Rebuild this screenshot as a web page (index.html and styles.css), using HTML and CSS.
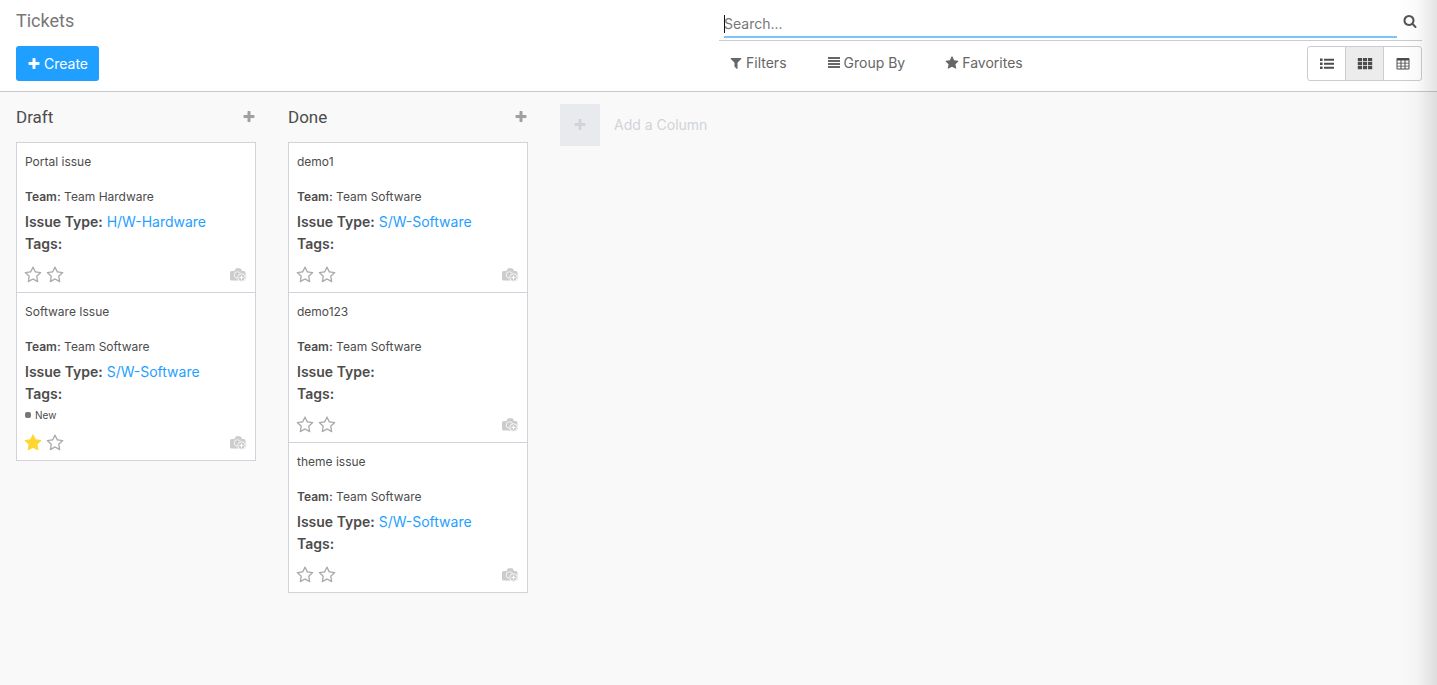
FILE: index.html
```html
<!DOCTYPE html>
<html lang="en">
<head>
<meta charset="utf-8">
<title>Tickets</title>
<link rel="stylesheet" href="styles.css">
</head>
<body>
<svg class="sprite" aria-hidden="true">
  <symbol id="plus" viewBox="0 0 1792 1792"><path d="M1600 736v192q0 40-28 68t-68 28h-416v416q0 40-28 68t-68 28h-192q-40 0-68-28t-28-68v-416h-416q-40 0-68-28t-28-68v-192q0-40 28-68t68-28h416v-416q0-40 28-68t68-28h192q40 0 68 28t28 68v416h416q40 0 68 28t28 68z"/></symbol>
  <symbol id="filter" viewBox="0 0 1792 1792"><path d="M1595 295q17 41-14 70l-493 493v742q0 42-39 59-13 5-25 5-27 0-45-19l-256-256q-19-19-19-45v-486l-493-493q-31-29-14-70 17-39 59-39h1280q42 0 59 39z"/></symbol>
  <symbol id="bars" viewBox="0 0 14 14"><path d="M1 1h12v2H1zM1 4h12v2H1zM1 7h12v2H1zM1 10h12v2H1z"/></symbol>
  <symbol id="star" viewBox="0 0 1792 1792"><path d="M1728 647q0 22-26 48l-363 354 86 500q1 7 1 20 0 21-10.500 35.500t-30.500 14.500q-19 0-40-12l-449-236-449 236q-22 12-40 12-21 0-31.500-14.500t-10.500-35.500q0-6 2-20l86-500-364-354q-25-27-25-48 0-37 56-46l502-73 225-455q19-41 49-41t49 41l225 455 502 73q56 9 56 46z"/></symbol>
  <symbol id="star-o" viewBox="0 0 1792 1792"><path d="M1201 1004l306-297-422-62-189-382-189 382-422 62 306 297-73 421 378-199 377 199zm527-357q0 22-26 48l-363 354 86 500q1 7 1 20 0 50-41 50-19 0-40-12l-449-236-449 236q-22 12-40 12-21 0-31.500-14.500t-10.500-35.500q0-6 2-20l86-500-364-354q-25-27-25-48 0-37 56-46l502-73 225-455q19-41 49-41t49 41l225 455 502 73q56 9 56 46z"/></symbol>
  <symbol id="search" viewBox="0 0 1792 1792"><path d="M1216 832q0-185-131.500-316.500t-316.500-131.500-316.500 131.500-131.500 316.500 131.500 316.500 316.500 131.500 316.500-131.500 131.500-316.500zm512 832q0 52-38 90t-90 38q-54 0-90-38l-343-342q-179 124-399 124-143 0-273.500-55.500t-225-150-150-225-55.500-273.500 55.500-273.500 150-225 225-150 273.500-55.500 273.500 55.500 225 150 150 225 55.500 273.500q0 220-124 399l343 343q37 37 37 90z"/></symbol>
  <symbol id="list" viewBox="0 0 16 14"><path d="M1 1.500h2.600v2.500H1zM5 1.800h10v2H5zM1 5.500h2.600v2.500H1zM5 5.800h10v2H5zM1 9.500h2.600v2.500H1zM5 9.800h10v2H5z"/></symbol>
  <symbol id="grid" viewBox="0 0 16 14"><path d="M.8 1h4.200v3.200H.8zM5.900 1h4.200v3.200H5.900zM11 1h4.200v3.200H11zM.8 5h4.200v3.200H.8zM5.900 5h4.200v3.200H5.900zM11 5h4.200v3.200H11zM.8 9h4.200v3.200H.8zM5.900 9h4.200v3.200H5.900zM11 9h4.200v3.200H11z"/></symbol>
  <symbol id="table" viewBox="0 0 16 14"><path fill-rule="evenodd" d="M2.500 1h11q1 0 1 1v9.500q0 1-1 1h-11q-1 0-1-1V2q0-1 1-1zM2.500 3.500h3v2.200h-3zM6.500 3.500h3v2.200h-3zM10.500 3.500h3v2.200h-3zM2.500 6.500h3v2.200h-3zM6.500 6.500h3v2.200h-3zM10.500 6.500h3v2.200h-3zM2.500 9.500h3v2h-3zM6.500 9.500h3v2h-3zM10.500 9.500h3v2h-3z"/></symbol>
  <symbol id="camera" viewBox="0 0 16 14">
    <path fill="#cccccc" d="M1.500 3h3l1-2q.3-.7 1-.7h3.500q.7 0 1 .7l1 2h2q1.500 0 1.500 1.500v6.500q0 1.500-1.500 1.500h-12.500q-1.500 0-1.500-1.500V4.500Q0 3 1.500 3z"/>
    <circle cx="7.500" cy="7" r="3.300" fill="none" stroke="#f4f4f4"/>
    <circle cx="11.500" cy="9.500" r="3.800" fill="#cccccc" stroke="#f8f8f8"/>
    <path d="M11.500 7.500v4M9.500 9.500h4" stroke="#fff"/>
  </symbol>
</svg>

<header class="panel">
  <div class="panel-left">
    <h1 class="title">Tickets</h1>
    <button class="create" type="button"><svg class="icon"><use href="#plus"/></svg>Create</button>
  </div>
  <div class="panel-right">
    <div class="search">
      <div class="field"><span class="caret"></span><input class="search-input" type="text" placeholder="Search..." aria-label="Search"></div>
      <button class="search-button" type="button" aria-label="Search"><svg class="icon"><use href="#search"/></svg></button>
    </div>
    <div class="tools">
      <div class="options">
        <button class="option" type="button"><svg class="icon"><use href="#filter"/></svg>Filters</button>
        <button class="option" type="button"><svg class="icon"><use href="#bars"/></svg>Group By</button>
        <button class="option" type="button"><svg class="icon"><use href="#star"/></svg>Favorites</button>
      </div>
      <div class="views">
        <button class="view" type="button" aria-label="List view"><svg class="view-icon"><use href="#list"/></svg></button>
        <button class="view active" type="button" aria-label="Kanban view"><svg class="view-icon"><use href="#grid"/></svg></button>
        <button class="view" type="button" aria-label="Pivot view"><svg class="view-icon"><use href="#table"/></svg></button>
      </div>
    </div>
  </div>
</header>

<main class="board">
  <section class="column">
    <div class="column-head"><h2 class="column-title">Draft</h2><button class="add" type="button" aria-label="Add to Draft"><svg class="icon"><use href="#plus"/></svg></button></div>
    <article class="card">
      <div class="name">Portal issue</div>
      <div class="team"><b>Team:</b> Team Hardware</div>
      <div class="line"><b>Issue Type:</b> <a class="link" href="#">H/W-Hardware</a></div>
      <div class="line"><b>Tags:</b></div>
      <div class="foot"><svg class="rate"><use href="#star-o"/></svg><svg class="rate"><use href="#star-o"/></svg><svg class="camera"><use href="#camera"/></svg></div>
    </article>
    <article class="card">
      <div class="name">Software Issue</div>
      <div class="team"><b>Team:</b> Team Software</div>
      <div class="line"><b>Issue Type:</b> <a class="link" href="#">S/W-Software</a></div>
      <div class="line"><b>Tags:</b></div>
      <div class="tag"><span class="dot"></span>New</div>
      <div class="foot"><svg class="rate on"><use href="#star"/></svg><svg class="rate"><use href="#star-o"/></svg><svg class="camera"><use href="#camera"/></svg></div>
    </article>
  </section>
  <section class="column">
    <div class="column-head"><h2 class="column-title">Done</h2><button class="add" type="button" aria-label="Add to Done"><svg class="icon"><use href="#plus"/></svg></button></div>
    <article class="card">
      <div class="name">demo1</div>
      <div class="team"><b>Team:</b> Team Software</div>
      <div class="line"><b>Issue Type:</b> <a class="link" href="#">S/W-Software</a></div>
      <div class="line"><b>Tags:</b></div>
      <div class="foot"><svg class="rate"><use href="#star-o"/></svg><svg class="rate"><use href="#star-o"/></svg><svg class="camera"><use href="#camera"/></svg></div>
    </article>
    <article class="card">
      <div class="name">demo123</div>
      <div class="team"><b>Team:</b> Team Software</div>
      <div class="line"><b>Issue Type:</b></div>
      <div class="line"><b>Tags:</b></div>
      <div class="foot"><svg class="rate"><use href="#star-o"/></svg><svg class="rate"><use href="#star-o"/></svg><svg class="camera"><use href="#camera"/></svg></div>
    </article>
    <article class="card">
      <div class="name">theme issue</div>
      <div class="team"><b>Team:</b> Team Software</div>
      <div class="line"><b>Issue Type:</b> <a class="link" href="#">S/W-Software</a></div>
      <div class="line"><b>Tags:</b></div>
      <div class="foot"><svg class="rate"><use href="#star-o"/></svg><svg class="rate"><use href="#star-o"/></svg><svg class="camera"><use href="#camera"/></svg></div>
    </article>
  </section>
  <button class="new-column" type="button"><span class="new-box"><svg class="icon"><use href="#plus"/></svg></span>Add a Column</button>
</main>
<div class="edge"></div>
</body>
</html>
```
FILE: styles.css
```css
* { box-sizing: border-box; }
body {
  margin: 0;
  min-height: 100vh;
  display: flex;
  flex-direction: column;
  background: #f9f9f9;
  color: #4c4c4c;
  font: 14px/22px Inter, "Open Sans", sans-serif;
}
button {
  margin: 0;
  padding: 0;
  border: 0;
  background: none;
  color: inherit;
  font: inherit;
  display: flex;
  align-items: center;
}
svg { fill: currentColor; flex: none; }
.sprite { position: absolute; width: 0; height: 0; }
.icon { width: 14px; height: 14px; }

.panel {
  display: grid;
  grid-template-columns: 1fr 1fr;
  padding: 0 15px 0 16px;
  background: #fff;
  border-bottom: 1px solid #c8c8c8;
}
.panel-left {
  display: flex;
  flex-direction: column;
  align-items: flex-start;
  gap: 14px;
  padding: 10px 0;
}
.title {
  margin: 0;
  color: #777;
  font: 400 18px/22px Roboto, sans-serif;
}
.create {
  height: 35px;
  padding: 0 11px;
  gap: 3px;
  border-radius: 3px;
  background: #1f9fff;
  color: #fff;
}
.panel-right { display: flex; flex-direction: column; }
.search {
  display: flex;
  height: 41px;
  padding: 10px 5px 2px 5px;
  gap: 6px;
  border-bottom: 1px solid #ccc;
}
.field { position: relative; flex: 1; display: flex; }
.search-input {
  width: 100%;
  padding: 2px 0 0;
  border: 0;
  border-bottom: 2px solid #7cc4fc;
  outline: 0;
  background: none;
  font: inherit;
  color: #4c4c4c;
}
.search-input::placeholder { color: #777; }
.caret { position: absolute; left: 0; top: 5px; width: 1px; height: 18px; background: #111; }
.search-button { height: 22px; color: #555; }
.tools { display: flex; justify-content: space-between; padding: 5px 0 10px; }
.options {
  display: flex;
  align-items: flex-start;
  gap: 40px;
  padding: 6px 0 0 10px;
  color: #666;
}
.option { gap: 3px; }
.views { display: flex; border: 1px solid #ccc; border-radius: 3px; overflow: hidden; }
.view { width: 37px; height: 33px; justify-content: center; }
.view + .view { width: 38px; border-left: 1px solid #ccc; }
.view.active { background: #ececec; }
.view-icon { width: 16px; height: 14px; }

.board { flex: 1; display: flex; align-items: flex-start; }
.column { width: 272px; padding: 0 16px; }
.column-head { display: flex; align-items: center; justify-content: space-between; height: 50px; }
.column-title { margin: 0; font: 400 17px/22px Roboto, sans-serif; }
.add { color: #a0a0a0; }
.card {
  padding: 10px 9px 8px 8px;
  border: 1px solid #d0d4da;
  background: #fff;
}
.card + .card { margin-top: -1px; }
.name, .team { font-size: 12px; line-height: 18px; }
.name { margin-bottom: 17px; }
.team { margin-bottom: 5px; }
.link { color: #1f9fff; text-decoration: none; }
b { font-weight: 600; }
.tag {
  display: flex;
  align-items: center;
  gap: 4px;
  height: 18px;
  padding-top: 2px;
  font-size: 10px;
}
.dot { width: 6px; height: 6px; border-radius: 2px; background: #777; }
.foot { display: flex; align-items: center; gap: 4px; height: 18px; margin: 11px 0 0 -1px; }
.rate { width: 18px; height: 18px; color: #aaa; }
.rate.on { color: #ffd632; }
.camera { width: 16px; height: 14px; margin-left: auto; }
.new-column { margin: 12px 0 0 16px; gap: 14px; color: #d0d4d8; }
.new-box {
  display: flex;
  align-items: center;
  justify-content: center;
  width: 40px;
  height: 42px;
  background: #e9eaee;
}
.edge {
  position: fixed;
  top: 0;
  right: 0;
  bottom: 0;
  width: 40px;
  background: linear-gradient(to right, rgba(0, 0, 0, 0), rgba(0, 0, 0, 0.02) 50%, rgba(0, 0, 0, 0.11));
  pointer-events: none;
}
```
